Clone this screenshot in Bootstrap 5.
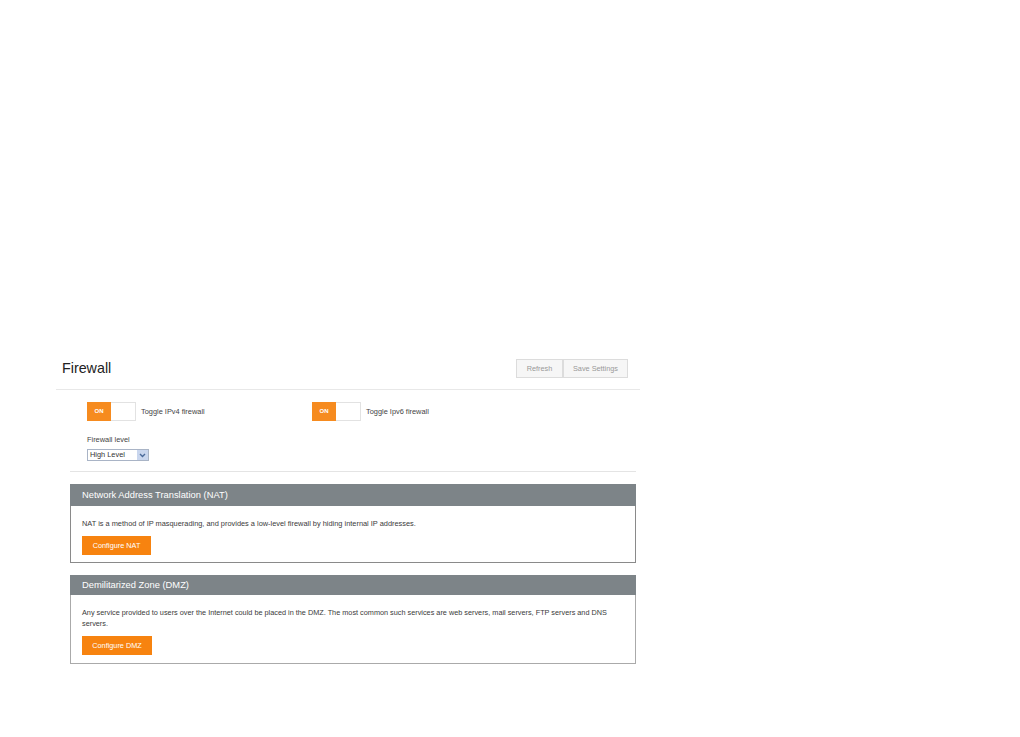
<!DOCTYPE html>
<html lang="en"><head><meta charset="utf-8"><title>Firewall</title>
<link href="https://cdn.jsdelivr.net/npm/bootstrap@5.3.0/dist/css/bootstrap.min.css" rel="stylesheet">
<style>
body{background:#fff;font-family:"Liberation Sans",Arial,sans-serif;color:#333;font-size:7.4px;line-height:1.2}
.fw-page{width:584px;margin:358px 0 0 56px}
.fw-head{height:32px;border-bottom:1px solid #e8e8e8;padding-left:6px;padding-right:12px}
.fw-title{font-size:14.3px;font-weight:400;color:#222;margin:0;line-height:20px}
.fw-tool{height:19px;margin-top:1px;background:#f6f6f6;border:1px solid #dcdcdc;color:#999;font-size:7.3px;line-height:17px;padding:0;text-align:center;border-radius:0}
.fw-refresh{width:47px}
.fw-save{width:65px;border-left-width:1px;margin-left:0}
.fw-body{padding:12px 4px 0 14px}
.fw-inner{padding-left:17px}
.fw-tog{width:49px;height:19px;border:1px solid #e2e2e2;background:#fff}
.fw-on{width:24px;height:19px;margin:-1px 0 0 -1px;background:#f68b1f;color:#fff;font-size:6px;font-weight:700;line-height:19px;text-align:center}
.fw-toggle-row{height:19px}
.fw-toggle-item{width:225px}
.fw-toglabel{color:#444;margin-left:5px;padding-top:1px}
.fw-lvl{margin-top:14px;color:#444;line-height:10px}
.fw-sel{width:62px;height:12px;margin-top:4px;border:1px solid #a9b4c6;background:#fff;color:#333;font-size:7.4px;line-height:10px;padding-left:2px}
.fw-arrow{width:11px;height:10px;background:#c9d6ee}
.fw-rule{height:1px;background:#e4e4e4;margin:10px 0 12px}
.fw-panel{border:1px solid #8a8a8a;border-top:0;background:#fff;margin-bottom:12px;padding:0}
.fw-panel-head{background:#7d8488;color:#fff;font-size:9.35px;margin:0 -1px;padding:0 12px;font-weight:400}
.fw-nat .fw-panel-head{height:22px;line-height:22px}
.fw-dmz .fw-panel-head{height:20px;line-height:20px}
.fw-panel-body{padding:0 11px}
.fw-nat .fw-panel-body{padding-top:12px;height:56px}
.fw-dmz{border-color:#aaa}
.fw-dmz .fw-panel-body{padding-top:12px;height:68px}
.fw-text{margin:0;color:#3a3a3a;line-height:11px;font-size:7.4px}
.fw-dmz .fw-text{font-size:7.3px}
.fw-cta{display:block;height:19px;margin-top:7px;background:#f7830f;border:0;border-radius:0;color:#fff;font-size:7.3px;line-height:19px;padding:0;text-align:center}
.fw-nat .fw-cta{width:69px}
.fw-dmz .fw-cta{width:70px}
</style></head>
<body>
<div class="fw-page">
  <div class="fw-head d-flex justify-content-between align-items-start">
    <h1 class="fw-title">Firewall</h1>
    <div class="d-flex">
      <button class="btn fw-tool fw-refresh">Refresh</button>
      <button class="btn fw-tool fw-save">Save Settings</button>
    </div>
  </div>
  <div class="fw-body">
    <div class="fw-inner">
      <div class="d-flex fw-toggle-row">
        <div class="d-flex align-items-center fw-toggle-item">
          <div class="fw-tog"><div class="fw-on">ON</div></div><span class="fw-toglabel">Toggle IPv4 firewall</span>
        </div>
        <div class="d-flex align-items-center fw-toggle-item">
          <div class="fw-tog"><div class="fw-on">ON</div></div><span class="fw-toglabel">Toggle Ipv6 firewall</span>
        </div>
      </div>
      <div class="fw-lvl">Firewall level</div>
      <div class="fw-sel d-flex justify-content-between align-items-center">
        <span>High Level</span>
        <span class="fw-arrow d-flex align-items-center justify-content-center"><svg width="7" height="5" viewBox="0 0 7 5"><path d="M1 1l2.5 2.5L6 1" fill="none" stroke="#4a6a9a" stroke-width="1.4"/></svg></span>
      </div>
    </div>
    <div class="fw-rule"></div>
    <div class="fw-panel fw-nat">
      <h2 class="fw-panel-head">Network Address Translation (NAT)</h2>
      <div class="fw-panel-body">
        <p class="fw-text">NAT is a method of IP masquerading, and provides a low-level firewall by hiding internal IP addresses.</p>
        <button class="btn fw-cta">Configure NAT</button>
      </div>
    </div>
    <div class="fw-panel fw-dmz">
      <h2 class="fw-panel-head">Demilitarized Zone (DMZ)</h2>
      <div class="fw-panel-body">
        <p class="fw-text">Any service provided to users over the Internet could be placed in the DMZ. The most common such services are web servers, mail servers, FTP servers and DNS servers.</p>
        <button class="btn fw-cta">Configure DMZ</button>
      </div>
    </div>
  </div>
</div>
<script src="https://cdn.jsdelivr.net/npm/bootstrap@5.3.0/dist/js/bootstrap.bundle.min.js"></script>
</body></html>
